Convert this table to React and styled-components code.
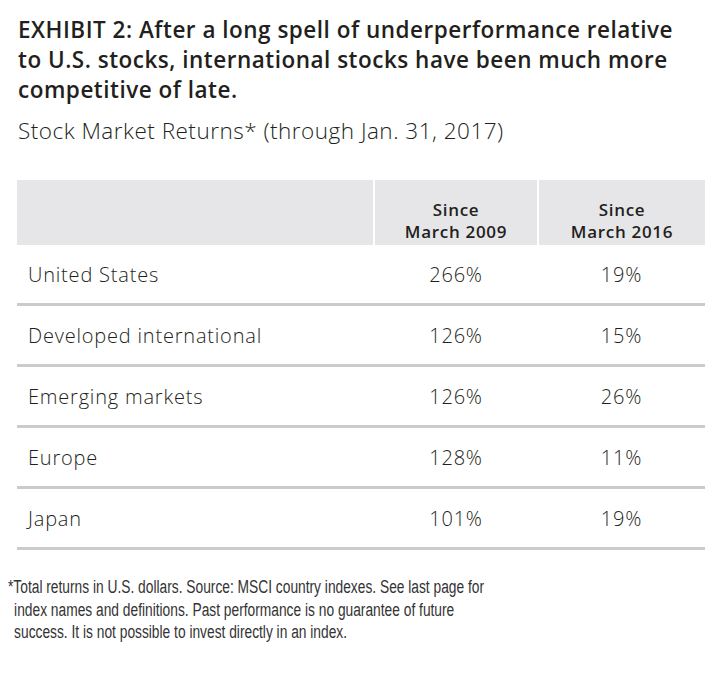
import React from 'react';
import styled, { createGlobalStyle } from 'styled-components';

const GlobalStyle = createGlobalStyle`
  body {
    margin: 0;
    background: #ffffff;
    font-family: "Open Sans", Lato, sans-serif;
    color: #231f20;
  }
`;

const Page = styled.div`
  padding: 15px 23px 0 17px;
`;

const Title = styled.h1`
  margin: 0 0 0 1px;
  font-size: 22.5px;
  letter-spacing: 0.5px;
  line-height: 30px;
  font-weight: 600;
  white-space: nowrap;
  color: #231f20;
`;

const Subtitle = styled.p`
  margin: 11px 0 0 1px;
  font-size: 22.5px;
  letter-spacing: 0.5px;
  line-height: 30px;
  font-weight: 300;
  color: #231f20;
`;

const Table = styled.table`
  margin-top: 34px;
  width: 688px;
  border-collapse: collapse;
  table-layout: fixed;
`;

const HeadCell = styled.th`
  background: #e6e6e8;
  height: 63px;
  padding: 0 0 2px;
  vertical-align: bottom;
  text-align: center;
  font-size: 17px;
  letter-spacing: 0.7px;
  line-height: 22px;
  font-weight: 600;
  color: #231f20;
  border-left: ${(p) => (p.$first ? 'none' : '2px solid #ffffff')};
`;

const HeadLine = styled.span`
  display: block;
`;

const Row = styled.tr`
  border-bottom: 3px solid #cbcbcb;
`;

const Cell = styled.td`
  height: 58px;
  padding: 0 0 0 ${(p) => (p.$label ? '11px' : '0')};
  text-align: ${(p) => (p.$label ? 'left' : 'center')};
  font-size: 20px;
  letter-spacing: 0.8px;
  font-weight: 300;
  color: #231f20;
`;

const Note = styled.div`
  margin: 26px 0 0 -9px;
  font-family: "Liberation Sans", Arial, sans-serif;
  font-size: 18px;
  line-height: 22.5px;
  color: #333333;
`;

const NoteLine = styled.div`
  white-space: nowrap;
  padding-left: ${(p) => (p.$indent ? '8px' : '0')};
  transform: scaleX(0.765);
  transform-origin: left center;
`;

const rows = [
  ['United States', '266%', '19%'],
  ['Developed international', '126%', '15%'],
  ['Emerging markets', '126%', '26%'],
  ['Europe', '128%', '11%'],
  ['Japan', '101%', '19%'],
];

export default function App() {
  return (
    <Page>
      <GlobalStyle />
      <Title>
        EXHIBIT 2: After a long spell of underperformance relative
        <br />
        to U.S. stocks, international stocks have been much more
        <br />
        competitive of late.
      </Title>
      <Subtitle>Stock Market Returns* (through Jan. 31, 2017)</Subtitle>
      <Table>
        <colgroup>
          <col style={{ width: 357 }} />
          <col style={{ width: 164 }} />
          <col style={{ width: 167 }} />
        </colgroup>
        <thead>
          <tr>
            <HeadCell $first />
            <HeadCell>
              <HeadLine>Since</HeadLine>
              <HeadLine>March 2009</HeadLine>
            </HeadCell>
            <HeadCell>
              <HeadLine>Since</HeadLine>
              <HeadLine>March 2016</HeadLine>
            </HeadCell>
          </tr>
        </thead>
        <tbody>
          {rows.map(([label, a, b]) => (
            <Row key={label}>
              <Cell $label>{label}</Cell>
              <Cell>{a}</Cell>
              <Cell>{b}</Cell>
            </Row>
          ))}
        </tbody>
      </Table>
      <Note>
        <NoteLine>*Total returns in U.S. dollars. Source: MSCI country indexes. See last page for</NoteLine>
        <NoteLine $indent>index names and definitions. Past performance is no guarantee of future</NoteLine>
        <NoteLine $indent>success. It is not possible to invest directly in an index.</NoteLine>
      </Note>
    </Page>
  );
}
